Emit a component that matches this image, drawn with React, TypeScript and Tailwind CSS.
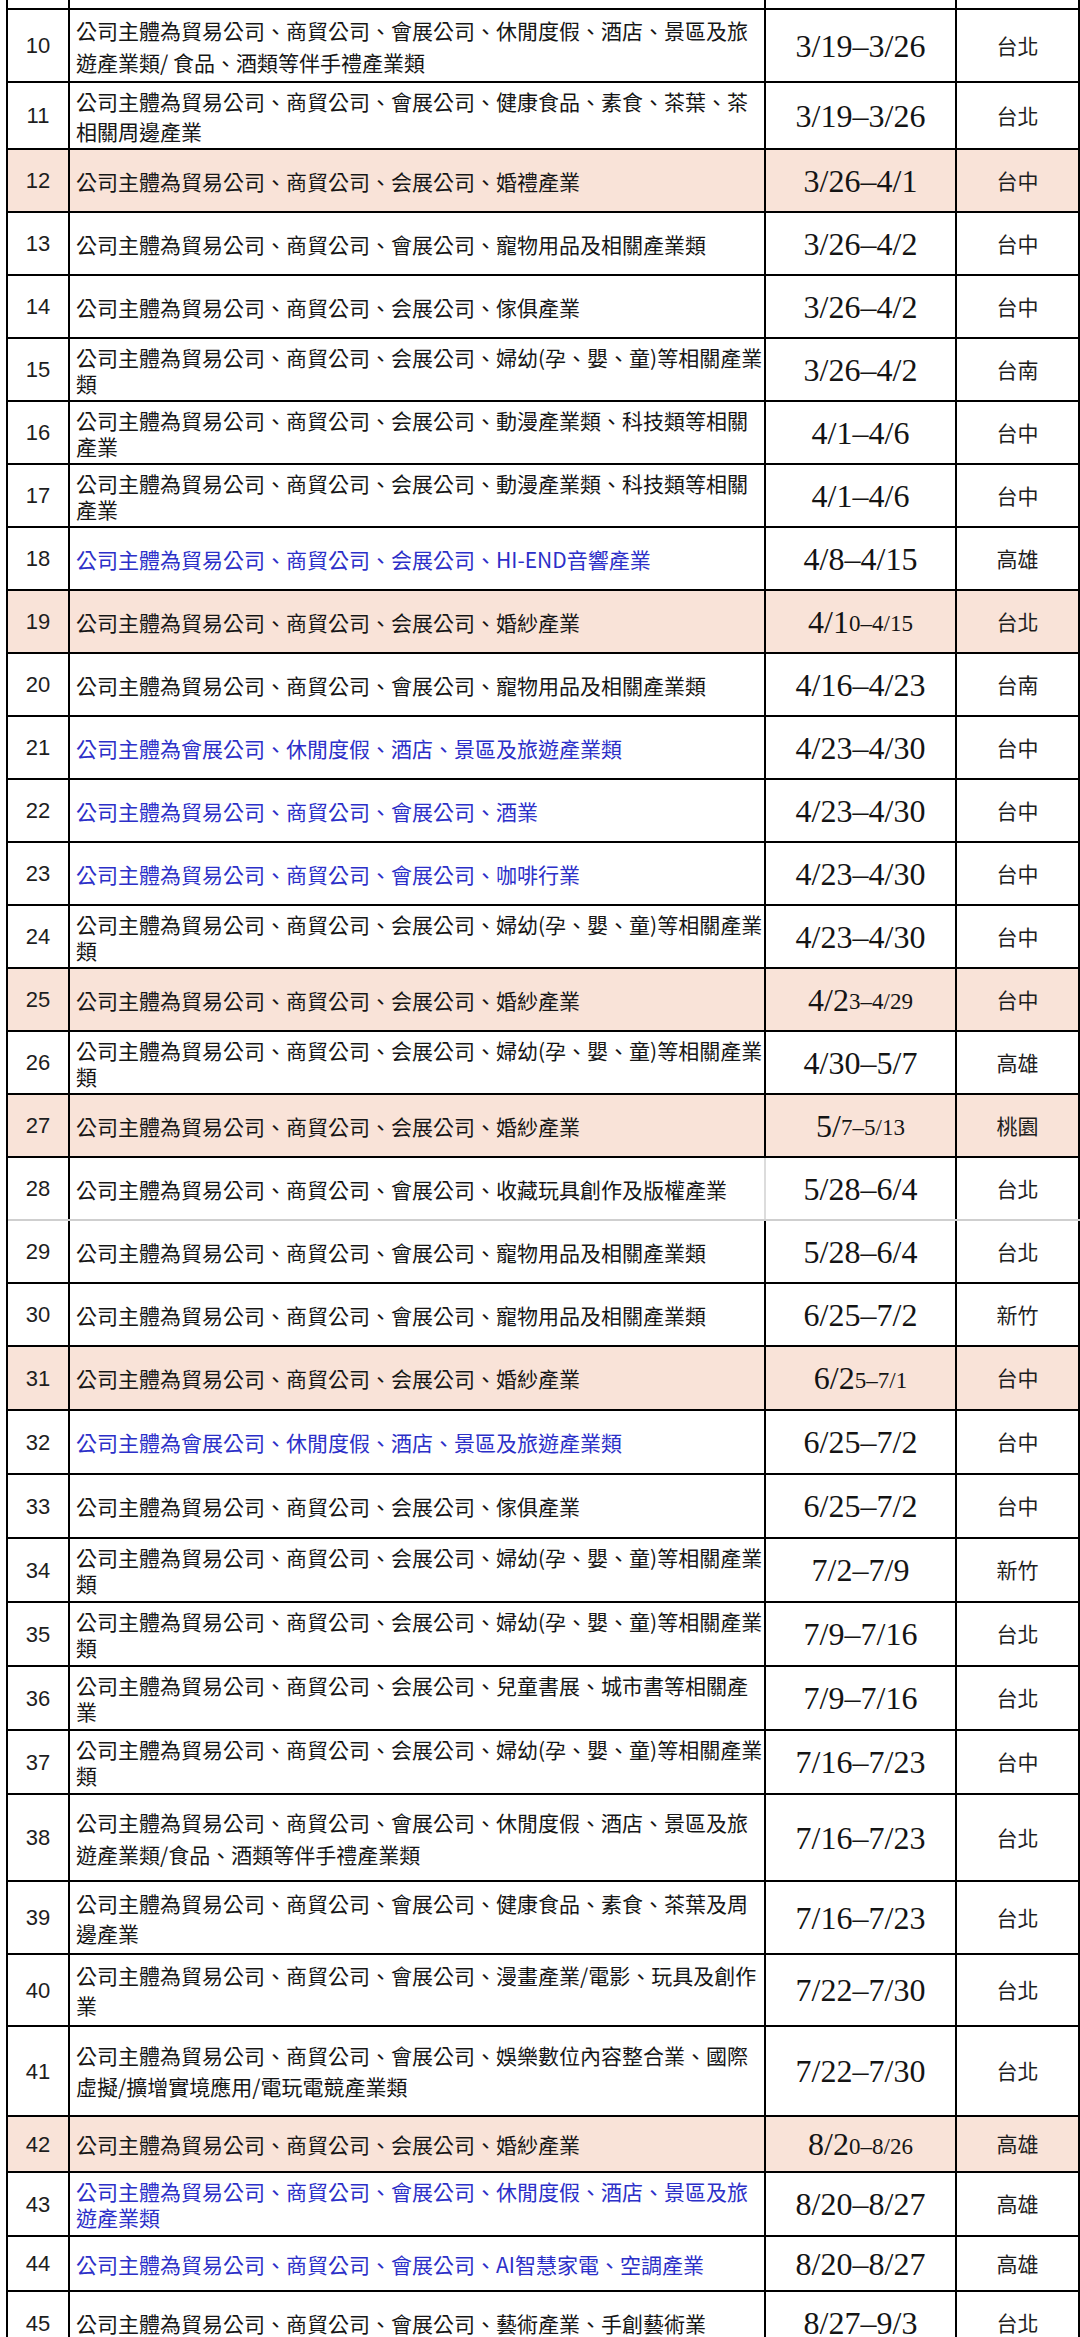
import React from "react";

type Row = {
  no: number;
  lines: string[];
  date: string;
  small?: string; // tail of the date set in a smaller size
  city: string;
  h: string;
  lead?: string;
  pink?: boolean;
  blue?: boolean;
  faint?: boolean;
};

const A = "公司主體為貿易公司、商貿公司、會展公司、";
const B = "公司主體為貿易公司、商貿公司、会展公司、";
const FUYOU = [B + "婦幼(孕、嬰、童)等相關產業", "類"];

const rows: Row[] = [
  { no: 10, lines: [A + "休閒度假、酒店、景區及旅", "遊產業類/ 食品、酒類等伴手禮產業類"], date: "3/19–3/26", city: "台北", h: "h-[73px]", lead: "leading-[32px]" },
  { no: 11, lines: [A + "健康食品、素食、茶葉、茶", "相關周邊產業"], date: "3/19–3/26", city: "台北", h: "h-[67px]", lead: "leading-[30px]" },
  { no: 12, lines: [B + "婚禮產業"], date: "3/26–4/1", city: "台中", h: "h-[63px]", pink: true },
  { no: 13, lines: [A + "寵物用品及相關產業類"], date: "3/26–4/2", city: "台中", h: "h-[63px]" },
  { no: 14, lines: [B + "傢俱產業"], date: "3/26–4/2", city: "台中", h: "h-[63px]" },
  { no: 15, lines: FUYOU, date: "3/26–4/2", city: "台南", h: "h-[63px]" },
  { no: 16, lines: [B + "動漫產業類、科技類等相關", "產業"], date: "4/1–4/6", city: "台中", h: "h-[63px]" },
  { no: 17, lines: [B + "動漫產業類、科技類等相關", "產業"], date: "4/1–4/6", city: "台中", h: "h-[63px]" },
  { no: 18, lines: [B + "HI-END音響產業"], date: "4/8–4/15", city: "高雄", h: "h-[63px]", blue: true },
  { no: 19, lines: [B + "婚紗產業"], date: "4/1", small: "0–4/15", city: "台北", h: "h-[63px]", pink: true },
  { no: 20, lines: [A + "寵物用品及相關產業類"], date: "4/16–4/23", city: "台南", h: "h-[63px]" },
  { no: 21, lines: ["公司主體為會展公司、休閒度假、酒店、景區及旅遊產業類"], date: "4/23–4/30", city: "台中", h: "h-[63px]", blue: true },
  { no: 22, lines: [A + "酒業"], date: "4/23–4/30", city: "台中", h: "h-[63px]", blue: true },
  { no: 23, lines: [A + "咖啡行業"], date: "4/23–4/30", city: "台中", h: "h-[63px]", blue: true },
  { no: 24, lines: FUYOU, date: "4/23–4/30", city: "台中", h: "h-[63px]" },
  { no: 25, lines: [B + "婚紗產業"], date: "4/2", small: "3–4/29", city: "台中", h: "h-[63px]", pink: true },
  { no: 26, lines: FUYOU, date: "4/30–5/7", city: "高雄", h: "h-[63px]" },
  { no: 27, lines: [B + "婚紗產業"], date: "5/", small: "7–5/13", city: "桃園", h: "h-[63px]", pink: true },
  { no: 28, lines: [A + "收藏玩具創作及版權產業"], date: "5/28–6/4", city: "台北", h: "h-[63px]", faint: true },
  { no: 29, lines: [A + "寵物用品及相關產業類"], date: "5/28–6/4", city: "台北", h: "h-[63px]" },
  { no: 30, lines: [A + "寵物用品及相關產業類"], date: "6/25–7/2", city: "新竹", h: "h-[63px]" },
  { no: 31, lines: [B + "婚紗產業"], date: "6/2", small: "5–7/1", city: "台中", h: "h-[64px]", pink: true },
  { no: 32, lines: ["公司主體為會展公司、休閒度假、酒店、景區及旅遊產業類"], date: "6/25–7/2", city: "台中", h: "h-[64px]", blue: true },
  { no: 33, lines: [B + "傢俱產業"], date: "6/25–7/2", city: "台中", h: "h-[64px]" },
  { no: 34, lines: FUYOU, date: "7/2–7/9", city: "新竹", h: "h-[64px]" },
  { no: 35, lines: FUYOU, date: "7/9–7/16", city: "台北", h: "h-[64px]" },
  { no: 36, lines: [B + "兒童書展、城市書等相關產", "業"], date: "7/9–7/16", city: "台北", h: "h-[64px]" },
  { no: 37, lines: FUYOU, date: "7/16–7/23", city: "台中", h: "h-[64px]" },
  { no: 38, lines: [A + "休閒度假、酒店、景區及旅", "遊產業類/食品、酒類等伴手禮產業類"], date: "7/16–7/23", city: "台北", h: "h-[87px]", lead: "leading-[32px]" },
  { no: 39, lines: [A + "健康食品、素食、茶葉及周", "邊產業"], date: "7/16–7/23", city: "台北", h: "h-[73px]", lead: "leading-[30px]" },
  { no: 40, lines: [A + "漫畫產業/電影、玩具及創作", "業"], date: "7/22–7/30", city: "台北", h: "h-[72px]", lead: "leading-[30px]" },
  { no: 41, lines: [A + "娛樂數位內容整合業、國際", "虛擬/擴增實境應用/電玩電競產業類"], date: "7/22–7/30", city: "台北", h: "h-[90px]", lead: "leading-[31px]" },
  { no: 42, lines: [B + "婚紗產業"], date: "8/2", small: "0–8/26", city: "高雄", h: "h-[56px]", pink: true },
  { no: 43, lines: [A + "休閒度假、酒店、景區及旅", "遊產業類"], date: "8/20–8/27", city: "高雄", h: "h-[64px]", blue: true },
  { no: 44, lines: [A + "AI智慧家電、空調產業"], date: "8/20–8/27", city: "高雄", h: "h-[55px]", blue: true },
  { no: 45, lines: [A + "藝術產業、手創藝術業"], date: "8/27–9/3", city: "台北", h: "h-[64px]" },
];

const sans = "font-['Liberation_Sans','Noto_Sans_CJK_TC',sans-serif]";
const cjk = "font-['Noto_Sans_CJK_TC','Noto_Sans',sans-serif]";
const serif = "font-['Liberation_Serif','Noto_Sans_CJK_TC',serif]";

const ScheduleRow = ({ row }: { row: Row }) => {
  const bg = row.pink ? "bg-[#f9e3d8]" : "bg-white";
  return (
    <div className={`flex border-b-2 ${row.faint ? "border-[#cfcfcf]" : "border-black"} ${row.h} ${bg}`}>
      <div className={`w-[62px] shrink-0 border-r-2 border-black flex items-center justify-center text-[22px] text-[#1e1e1e] ${sans}`}>
        {row.no}
      </div>
      <div
        className={`w-[696px] shrink-0 border-r-2 ${row.faint ? "border-[#dcdcdc]" : "border-black"} flex flex-col justify-center pl-[6px] whitespace-nowrap text-[21px] ${row.lead ?? "leading-[26px]"} ${cjk} ${row.blue ? "text-[#2c2fc8]" : "text-[#161616]"}`}
      >
        {row.lines.map((line, i) => (
          <span key={i}>{line}</span>
        ))}
      </div>
      <div className={`w-[191px] shrink-0 border-r-2 border-black flex items-center justify-center whitespace-nowrap text-[32px] text-[#141414] ${serif}`}>
        <span>{row.date}</span>
        {row.small && <span className="text-[23px] pt-[6px]">{row.small}</span>}
      </div>
      <div className={`flex-1 border-r-2 border-black flex items-center justify-center text-[21px] text-[#1e1e1e] ${cjk}`}>
        {row.city}
      </div>
    </div>
  );
};

export default function App() {
  return (
    <div className="w-[1080px] h-[2337px] overflow-hidden bg-white">
      <div className="ml-[6px] border-l-2 border-black">
        {/* tail of the row above, cut off by the screenshot */}
        <div className="flex h-[10px] border-b-2 border-black">
          <div className="w-[62px] shrink-0 border-r-2 border-black" />
          <div className="w-[696px] shrink-0 border-r-2 border-black" />
          <div className="w-[191px] shrink-0 border-r-2 border-black" />
          <div className="flex-1 border-r-2 border-black" />
        </div>
        {rows.map((row) => (
          <ScheduleRow key={row.no} row={row} />
        ))}
      </div>
    </div>
  );
}
